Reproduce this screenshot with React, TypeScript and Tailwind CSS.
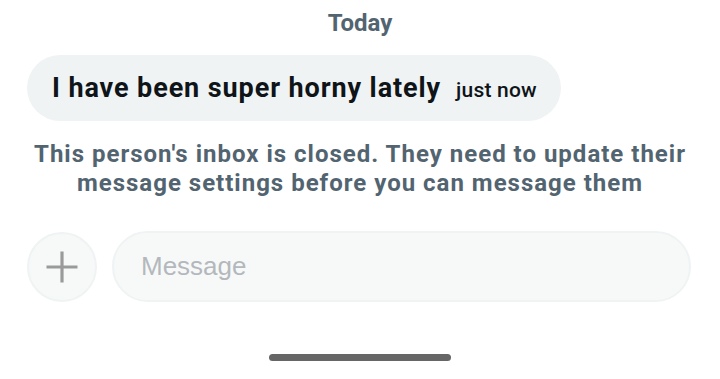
import React from 'react';

function PlusIcon() {
  return (
    <svg width="34" height="34" viewBox="0 0 34 34" fill="none">
      <path d="M17 1.5v31M1.5 17h31" stroke="#9a9a9a" strokeWidth="3.2" />
    </svg>
  );
}

export default function App() {
  return (
    <div
      className="w-[720px] h-[379px] bg-white flex flex-col overflow-hidden"
      style={{ fontFamily: 'Roboto, "Liberation Sans", sans-serif' }}
    >
      {/* Date header */}
      <div className="pt-[8px] h-[38px] text-center text-[24px] leading-[30px] font-bold text-[#536471]">
        Today
      </div>

      {/* Incoming bubble */}
      <div className="mt-[17px] pl-[27px] flex">
        <div className="h-[66px] rounded-full bg-[#eff3f4] pl-[25px] pr-[24px] flex items-baseline pt-[17px]">
          <span className="text-[27px] leading-[32px] font-bold tracking-[0.9px] text-[#0f1419]">
            I have been super horny lately
          </span>
          <span className="ml-[15px] text-[21px] leading-[32px] font-medium tracking-[0.2px] text-[#0f1419]">
            just now
          </span>
        </div>
      </div>

      {/* Closed inbox notice */}
      <div className="mt-[19px] px-[20px] text-center text-[24px] leading-[29px] font-bold tracking-[1px] text-[#536471]">
        This person's inbox is closed. They need to update their
        <br />
        message settings before you can message them
      </div>

      {/* Composer */}
      <div className="mt-[33px] pl-[27px] pr-[29px] flex items-center gap-[15px]">
        <div className="w-[70px] h-[70px] shrink-0 rounded-full bg-[#f7f9f9] border-2 border-[#eff3f4] flex items-center justify-center">
          <PlusIcon />
        </div>
        <div className="flex-1 h-[71px] rounded-full bg-[#f7f9f9] border-2 border-[#eff3f4] flex items-center pl-[27px]">
          <span
            className="text-[26px] text-[#b4b8bc]"
            style={{ fontFamily: '"Liberation Sans", Arial, sans-serif' }}
          >
            Message
          </span>
        </div>
      </div>

      {/* Home indicator */}
      <div className="mt-[52px] flex justify-center">
        <div className="w-[182px] h-[7px] rounded-full bg-[#666666]" />
      </div>
    </div>
  );
}
